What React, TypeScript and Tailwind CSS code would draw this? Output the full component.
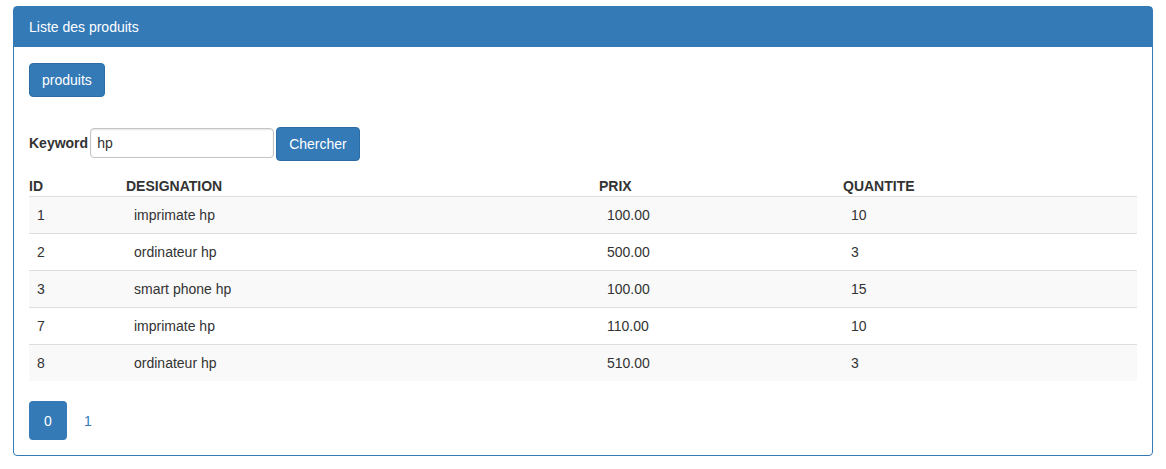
const produits = [
  { id: 1, designation: "imprimate hp", prix: "100.00", quantite: 10 },
  { id: 2, designation: "ordinateur hp", prix: "500.00", quantite: 3 },
  { id: 3, designation: "smart phone hp", prix: "100.00", quantite: 15 },
  { id: 7, designation: "imprimate hp", prix: "110.00", quantite: 10 },
  { id: 8, designation: "ordinateur hp", prix: "510.00", quantite: 3 },
];

const App = () => {
  return (
    <div className="bg-white pt-[6px] px-[13px] pb-[12px] text-[14px] leading-5 text-[#333] font-['Liberation_Sans',Arial,sans-serif]">
      <div className="border border-[#337ab7] rounded">
        <div className="bg-[#337ab7] text-white px-[15px] py-[10px] h-[40px]">
          Liste des produits
        </div>

        <div className="p-[15px]">
          {/* bouton produits */}
          <button className="bg-[#337ab7] border border-[#2e6da4] text-white rounded px-3 h-[34px] mt-[1px]">
            produits
          </button>

          {/* recherche */}
          <form className="flex items-start mt-[30px] h-[34px]">
            <label className="font-bold mt-[6px]">Keyword</label>
            <input
              type="text"
              defaultValue="hp"
              className="ml-[2px] mt-[1px] w-[184px] h-[30px] border border-[#c4c4c4] rounded px-[6px] text-[#333] shadow-[inset_0_1px_2px_rgba(0,0,0,0.1)] outline-none"
            />
            <button
              type="button"
              className="ml-[2px] bg-[#337ab7] border border-[#2e6da4] text-white rounded px-3 h-[34px]"
            >
              Chercher
            </button>
          </form>

          {/* table des produits */}
          <table className="w-full table-fixed mt-[15px] border-collapse">
            <thead>
              <tr className="border-b border-[#ddd]">
                <th className="w-[97px] text-left font-bold p-0">ID</th>
                <th className="w-[473px] text-left font-bold p-0">DESIGNATION</th>
                <th className="w-[244px] text-left font-bold p-0">PRIX</th>
                <th className="text-left font-bold p-0">QUANTITE</th>
              </tr>
            </thead>
            <tbody>
              {produits.map((p, i) => (
                <tr
                  key={p.id}
                  className={`${i % 2 === 0 ? "bg-[#f9f9f9]" : "bg-white"} ${i > 0 ? "border-t border-[#ddd]" : ""}`}
                >
                  <td className="px-2 py-2">{p.id}</td>
                  <td className="px-2 py-2">{p.designation}</td>
                  <td className="px-2 py-2">{p.prix}</td>
                  <td className="px-2 py-2">{p.quantite}</td>
                </tr>
              ))}
            </tbody>
          </table>

          {/* pagination */}
          <div className="flex items-center mt-[20px]">
            <button className="w-[38px] h-[39px] bg-[#337ab7] text-white rounded">0</button>
            <a href="#" className="ml-[5px] px-3 h-[39px] flex items-center text-[#337ab7]">
              1
            </a>
          </div>
        </div>
      </div>
    </div>
  );
};

export default App;
